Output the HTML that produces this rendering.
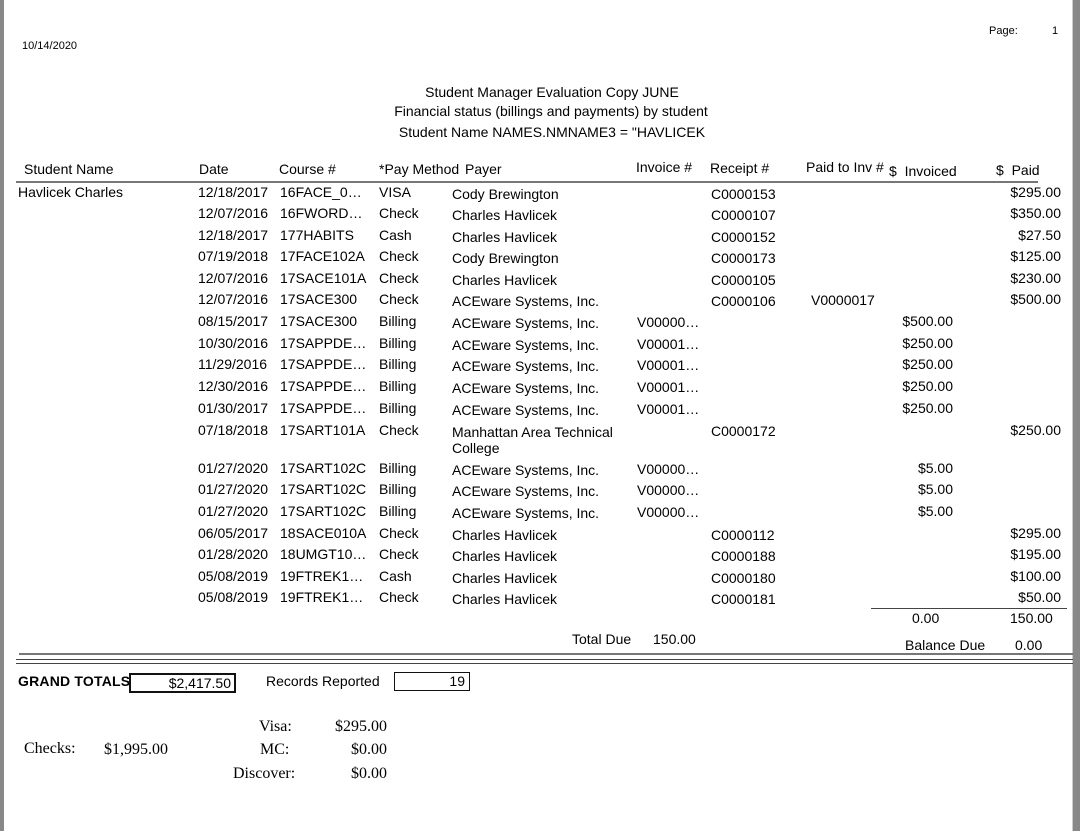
<!DOCTYPE html>
<html><head><style>
body{margin:0;width:1080px;height:831px;background:#fff;position:relative;overflow:hidden;font-family:"Liberation Sans",Arial,sans-serif;font-size:14px;color:#000}
.a{position:absolute;white-space:nowrap;line-height:15px}
.r{text-align:right}
.s{font-family:"Liberation Serif",serif;font-size:16px}
.ln{position:absolute;background:#777}
</style></head><body>
<div class="ln" style="left:0;top:0;width:4px;height:831px;background:#888"></div>
<div class="ln" style="left:1073px;top:0;width:7px;height:831px;background:#888"></div>
<div class="ln" style="left:1072px;top:0;width:1px;height:831px;background:#ccc"></div>

<div class="a" style="left:22px;top:39px;font-size:11px">10/14/2020</div>
<div class="a" style="left:989px;top:24px;font-size:11px">Page:</div>
<div class="a" style="left:1052px;top:24px;font-size:11px">1</div>

<div class="a" style="left:376px;top:85px;width:352px;text-align:center">Student Manager Evaluation Copy JUNE</div>
<div class="a" style="left:370px;top:104px;width:362px;text-align:center">Financial status (billings and payments) by student</div>
<div class="a" style="left:376px;top:125px;width:352px;text-align:center">Student Name NAMES.NMNAME3 = "HAVLICEK</div>

<div class="a" style="left:24px;top:162px">Student Name</div>
<div class="a" style="left:199px;top:162px">Date</div>
<div class="a" style="left:279px;top:162px">Course #</div>
<div class="a" style="left:379px;top:162px">*Pay Method</div>
<div class="a" style="left:465px;top:162px">Payer</div>
<div class="a" style="left:636px;top:160px">Invoice #</div>
<div class="a" style="left:710px;top:161px">Receipt #</div>
<div class="a" style="left:806px;top:160px">Paid to Inv #</div>
<div class="a" style="left:889px;top:164px">$ &nbsp;Invoiced</div>
<div class="a" style="left:996px;top:163px">$ &nbsp;Paid</div>
<div class="ln" style="left:16px;top:181px;width:1022px;height:2px"></div>

<div class="a" style="left:18px;top:185px">Havlicek Charles</div>

<div class="a" style="left:198px;top:185px">12/18/2017</div><div class="a" style="left:280px;top:185px">16FACE_0…</div><div class="a" style="left:379px;top:185px">VISA</div><div class="a" style="left:452px;top:187px">Cody Brewington</div><div class="a" style="left:711px;top:187px">C0000153</div><div class="a r" style="left:961px;width:100px;top:185px">$295.00</div>
<div class="a" style="left:198px;top:206px">12/07/2016</div><div class="a" style="left:280px;top:206px">16FWORD…</div><div class="a" style="left:379px;top:206px">Check</div><div class="a" style="left:452px;top:208px">Charles Havlicek</div><div class="a" style="left:711px;top:208px">C0000107</div><div class="a r" style="left:961px;width:100px;top:206px">$350.00</div>
<div class="a" style="left:198px;top:228px">12/18/2017</div><div class="a" style="left:280px;top:228px">177HABITS</div><div class="a" style="left:379px;top:228px">Cash</div><div class="a" style="left:452px;top:230px">Charles Havlicek</div><div class="a" style="left:711px;top:230px">C0000152</div><div class="a r" style="left:961px;width:100px;top:228px">$27.50</div>
<div class="a" style="left:198px;top:249px">07/19/2018</div><div class="a" style="left:280px;top:249px">17FACE102A</div><div class="a" style="left:379px;top:249px">Check</div><div class="a" style="left:452px;top:251px">Cody Brewington</div><div class="a" style="left:711px;top:251px">C0000173</div><div class="a r" style="left:961px;width:100px;top:249px">$125.00</div>
<div class="a" style="left:198px;top:271px">12/07/2016</div><div class="a" style="left:280px;top:271px">17SACE101A</div><div class="a" style="left:379px;top:271px">Check</div><div class="a" style="left:452px;top:273px">Charles Havlicek</div><div class="a" style="left:711px;top:273px">C0000105</div><div class="a r" style="left:961px;width:100px;top:271px">$230.00</div>
<div class="a" style="left:198px;top:292px">12/07/2016</div><div class="a" style="left:280px;top:292px">17SACE300</div><div class="a" style="left:379px;top:292px">Check</div><div class="a" style="left:452px;top:294px">ACEware Systems, Inc.</div><div class="a" style="left:711px;top:294px">C0000106</div><div class="a" style="left:811px;top:293px">V0000017</div><div class="a r" style="left:961px;width:100px;top:292px">$500.00</div>
<div class="a" style="left:198px;top:314px">08/15/2017</div><div class="a" style="left:280px;top:314px">17SACE300</div><div class="a" style="left:379px;top:314px">Billing</div><div class="a" style="left:452px;top:316px">ACEware Systems, Inc.</div><div class="a" style="left:637px;top:315px">V00000…</div><div class="a r" style="left:853px;width:100px;top:314px">$500.00</div>
<div class="a" style="left:198px;top:336px">10/30/2016</div><div class="a" style="left:280px;top:336px">17SAPPDE…</div><div class="a" style="left:379px;top:336px">Billing</div><div class="a" style="left:452px;top:338px">ACEware Systems, Inc.</div><div class="a" style="left:637px;top:337px">V00001…</div><div class="a r" style="left:853px;width:100px;top:336px">$250.00</div>
<div class="a" style="left:198px;top:357px">11/29/2016</div><div class="a" style="left:280px;top:357px">17SAPPDE…</div><div class="a" style="left:379px;top:357px">Billing</div><div class="a" style="left:452px;top:359px">ACEware Systems, Inc.</div><div class="a" style="left:637px;top:358px">V00001…</div><div class="a r" style="left:853px;width:100px;top:357px">$250.00</div>
<div class="a" style="left:198px;top:379px">12/30/2016</div><div class="a" style="left:280px;top:379px">17SAPPDE…</div><div class="a" style="left:379px;top:379px">Billing</div><div class="a" style="left:452px;top:381px">ACEware Systems, Inc.</div><div class="a" style="left:637px;top:380px">V00001…</div><div class="a r" style="left:853px;width:100px;top:379px">$250.00</div>
<div class="a" style="left:198px;top:401px">01/30/2017</div><div class="a" style="left:280px;top:401px">17SAPPDE…</div><div class="a" style="left:379px;top:401px">Billing</div><div class="a" style="left:452px;top:403px">ACEware Systems, Inc.</div><div class="a" style="left:637px;top:402px">V00001…</div><div class="a r" style="left:853px;width:100px;top:401px">$250.00</div>
<div class="a" style="left:198px;top:423px">07/18/2018</div><div class="a" style="left:280px;top:423px">17SART101A</div><div class="a" style="left:379px;top:423px">Check</div><div class="a" style="left:452px;top:424px;line-height:16px">Manhattan Area Technical<br>College</div><div class="a" style="left:711px;top:424px">C0000172</div><div class="a r" style="left:961px;width:100px;top:423px">$250.00</div>
<div class="a" style="left:198px;top:461px">01/27/2020</div><div class="a" style="left:280px;top:461px">17SART102C</div><div class="a" style="left:379px;top:461px">Billing</div><div class="a" style="left:452px;top:463px">ACEware Systems, Inc.</div><div class="a" style="left:637px;top:462px">V00000…</div><div class="a r" style="left:853px;width:100px;top:461px">$5.00</div>
<div class="a" style="left:198px;top:482px">01/27/2020</div><div class="a" style="left:280px;top:482px">17SART102C</div><div class="a" style="left:379px;top:482px">Billing</div><div class="a" style="left:452px;top:484px">ACEware Systems, Inc.</div><div class="a" style="left:637px;top:483px">V00000…</div><div class="a r" style="left:853px;width:100px;top:482px">$5.00</div>
<div class="a" style="left:198px;top:504px">01/27/2020</div><div class="a" style="left:280px;top:504px">17SART102C</div><div class="a" style="left:379px;top:504px">Billing</div><div class="a" style="left:452px;top:506px">ACEware Systems, Inc.</div><div class="a" style="left:637px;top:505px">V00000…</div><div class="a r" style="left:853px;width:100px;top:504px">$5.00</div>
<div class="a" style="left:198px;top:526px">06/05/2017</div><div class="a" style="left:280px;top:526px">18SACE010A</div><div class="a" style="left:379px;top:526px">Check</div><div class="a" style="left:452px;top:528px">Charles Havlicek</div><div class="a" style="left:711px;top:528px">C0000112</div><div class="a r" style="left:961px;width:100px;top:526px">$295.00</div>
<div class="a" style="left:198px;top:547px">01/28/2020</div><div class="a" style="left:280px;top:547px">18UMGT10…</div><div class="a" style="left:379px;top:547px">Check</div><div class="a" style="left:452px;top:549px">Charles Havlicek</div><div class="a" style="left:711px;top:549px">C0000188</div><div class="a r" style="left:961px;width:100px;top:547px">$195.00</div>
<div class="a" style="left:198px;top:569px">05/08/2019</div><div class="a" style="left:280px;top:569px">19FTREK1…</div><div class="a" style="left:379px;top:569px">Cash</div><div class="a" style="left:452px;top:571px">Charles Havlicek</div><div class="a" style="left:711px;top:571px">C0000180</div><div class="a r" style="left:961px;width:100px;top:569px">$100.00</div>
<div class="a" style="left:198px;top:590px">05/08/2019</div><div class="a" style="left:280px;top:590px">19FTREK1…</div><div class="a" style="left:379px;top:590px">Check</div><div class="a" style="left:452px;top:592px">Charles Havlicek</div><div class="a" style="left:711px;top:592px">C0000181</div><div class="a r" style="left:961px;width:100px;top:590px">$50.00</div>

<div class="ln" style="left:871px;top:608px;width:196px;height:1px;background:#444"></div>
<div class="a" style="left:912px;top:611px">0.00</div>
<div class="a" style="left:1010px;top:611px">150.00</div>
<div class="a" style="left:572px;top:632px">Total Due</div>
<div class="a" style="left:653px;top:632px">150.00</div>
<div class="a" style="left:905px;top:638px">Balance Due</div>
<div class="a" style="left:1015px;top:638px">0.00</div>

<div class="ln" style="left:19px;top:653px;width:1054px;height:2px;background:#777"></div>
<div class="ln" style="left:16px;top:659px;width:1057px;height:1px;background:#444"></div>
<div class="ln" style="left:16px;top:663px;width:1057px;height:1px;background:#444"></div>

<div class="a" style="left:18px;top:674px;font-weight:bold;font-size:14px;letter-spacing:0.2px">GRAND TOTALS</div>
<div class="a r" style="left:129px;top:673px;width:100px;height:16px;border:2px solid #111;padding-right:3px;line-height:16px">$2,417.50</div>
<div class="a" style="left:266px;top:674px">Records Reported</div>
<div class="a r" style="left:394px;top:672px;width:70px;height:17px;border:1px solid #111;padding-right:4px;line-height:17px">19</div>

<div class="a s" style="left:259px;top:719px">Visa:</div>
<div class="a s r" style="left:300px;top:719px;width:87px">$295.00</div>
<div class="a s" style="left:24px;top:741px">Checks:</div>
<div class="a s" style="left:104px;top:742px">$1,995.00</div>
<div class="a s" style="left:260px;top:742px">MC:</div>
<div class="a s r" style="left:300px;top:742px;width:87px">$0.00</div>
<div class="a s" style="left:233px;top:766px">Discover:</div>
<div class="a s r" style="left:300px;top:766px;width:87px">$0.00</div>
</body></html>
